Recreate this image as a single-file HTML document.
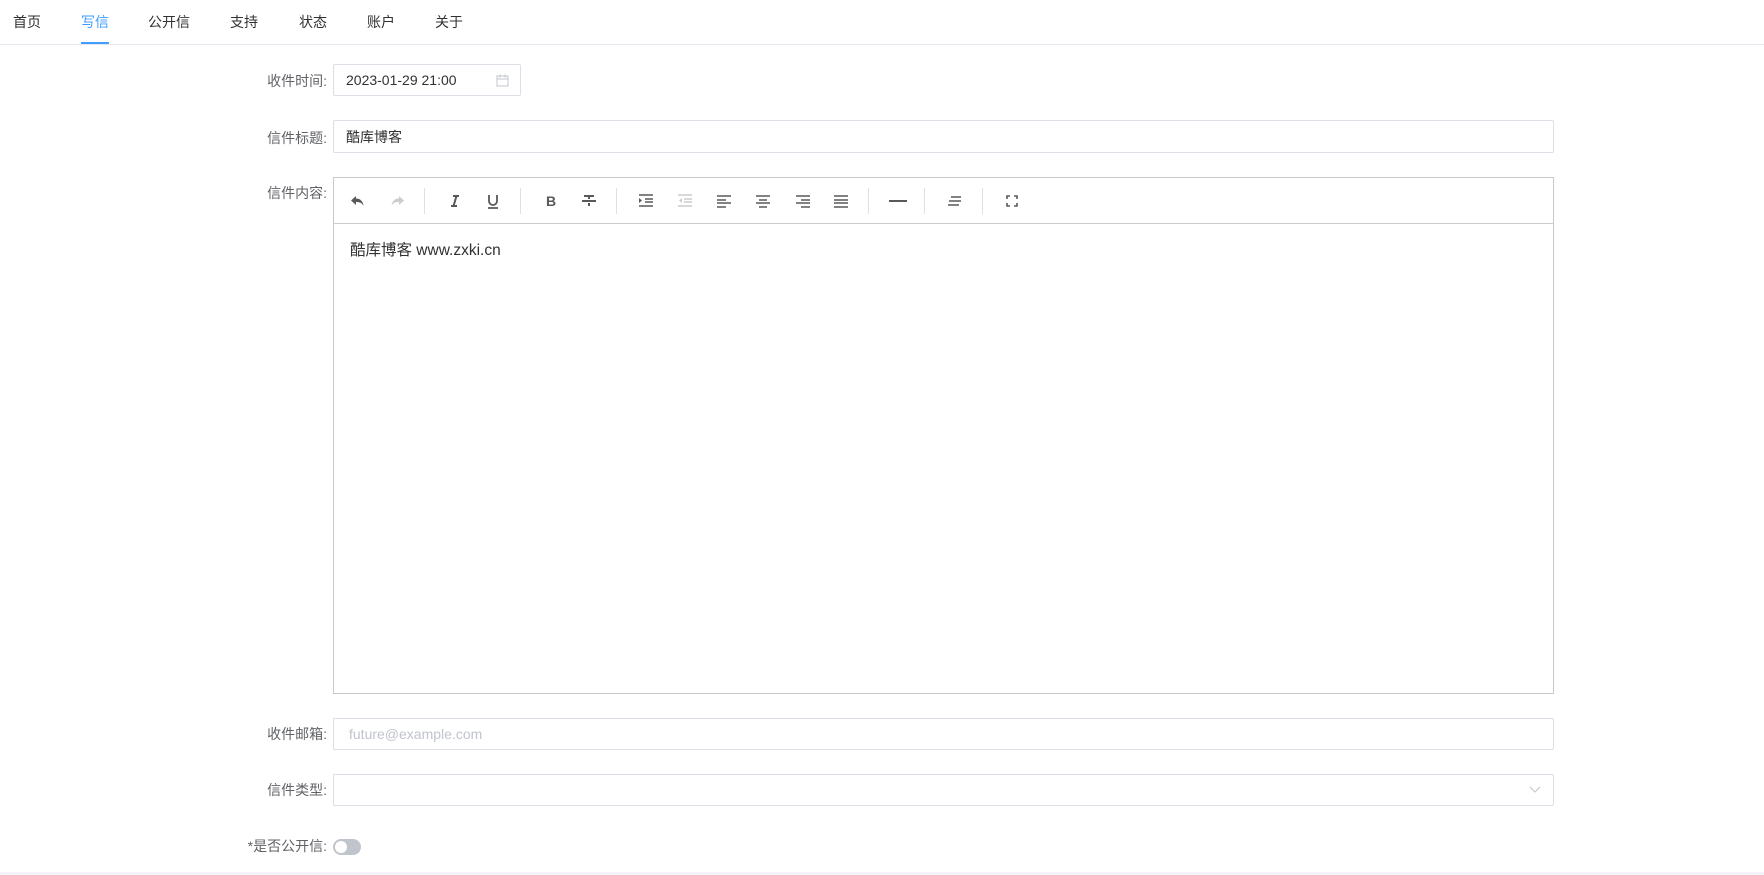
<!DOCTYPE html>
<html><head><meta charset="utf-8"><style>
*{box-sizing:border-box;margin:0;padding:0}
body{width:1764px;height:875px;background:#fff;font-family:"Liberation Sans","Noto Sans CJK SC",sans-serif;color:#303133;position:relative;overflow:hidden}
.nav{position:absolute;left:0;top:0;width:1764px;height:45px;border-bottom:1px solid #e4e7ed}
.nav span{position:absolute;top:12px;font-size:14px;line-height:20px}
.nav .act{color:#409eff}
.ul{position:absolute;left:81px;top:42px;width:28px;height:2px;background:#409eff}
.lab{position:absolute;right:1437px;font-size:14px;color:#606266;line-height:20px;white-space:nowrap}
.box{position:absolute;left:333px;width:1221px;height:32px;border:1px solid #dcdfe6;border-radius:2px;font-size:14px;line-height:30px;padding-left:12px}
.ed{position:absolute;left:333px;top:177px;width:1221px;height:517px;border:1px solid #c9c9c9}
.tb{height:46px;border-bottom:1px solid #ccc;position:relative}
.ic{position:absolute;top:14px;width:18px;height:18px}
.sep{position:absolute;top:10px;width:1px;height:26px;background:#e0e0e0}
.bot{position:absolute;left:0;top:872px;width:1764px;height:3px;background:#f2f4f7}
</style></head><body>
<div class="nav">
<span style="left:13px">首页</span><span class="act" style="left:81px">写信</span><span style="left:148px">公开信</span><span style="left:230px">支持</span><span style="left:299px">状态</span><span style="left:367px">账户</span><span style="left:435px">关于</span>
<div class="ul"></div></div>

<div class="lab" style="top:71px">收件时间:</div>
<div class="box" style="top:64px;width:188px">2023-01-29 21:00
<svg style="position:absolute;right:11px;top:9px" width="13" height="13" viewBox="0 0 13 13" fill="none" stroke="#c0c4cc" stroke-width="1"><rect x="1" y="2" width="11" height="10"/><path d="M1 5h11M4 0.5v3M9 0.5v3"/></svg></div>

<div class="lab" style="top:128px">信件标题:</div>
<div class="box" style="top:120px;height:33px;line-height:32px">酷库博客</div>

<div class="lab" style="top:183px">信件内容:</div>
<div class="ed"><div class="tb">
<svg class="ic" style="left:15px" viewBox="0 0 18 18"><path d="M7 4 2 8.5 7 13V10c4 0 6 1 7.5 4-0.5-4.5-3-7.5-7.5-7.5z" fill="#595959"/></svg>
<svg class="ic" style="left:54px" viewBox="0 0 18 18"><path d="M11 4l5 4.5-5 4.5V10c-4 0-6 1-7.5 4 .5-4.5 3-7.5 7.5-7.5z" fill="#ccc"/></svg>
<div class="sep" style="left:90px"></div>
<svg class="ic" style="left:112px" viewBox="0 0 18 18"><path d="M7 4h6M5 14h6M10.5 4 7.5 14" stroke="#595959" stroke-width="2" fill="none"/></svg>
<svg class="ic" style="left:150px" viewBox="0 0 18 18"><path d="M5 3v6a4 4 0 0 0 8 0V3M4 16h10" stroke="#595959" stroke-width="1.8" fill="none"/></svg>
<div class="sep" style="left:186px"></div>
<div class="ic" style="left:208px;font-weight:bold;font-size:14px;color:#595959;text-align:center;line-height:18px">B</div>
<svg class="ic" style="left:246px" viewBox="0 0 18 18"><path d="M4 4h10M9 4v3M2 9h14M9 11v3" stroke="#595959" stroke-width="2" fill="none"/></svg>
<div class="sep" style="left:282px"></div>
<svg class="ic" style="left:303px" viewBox="0 0 18 18"><path d="M2 3h14M8 7h8M8 10h8M2 14h14" stroke="#595959" stroke-width="1.6"/><path d="M2 6l3 2.5L2 11z" fill="#595959"/></svg>
<svg class="ic" style="left:342px" viewBox="0 0 18 18"><path d="M2 3h14M8 7h8M8 10h8M2 14h14" stroke="#ccc" stroke-width="1.6"/><path d="M6 6 3 8.5 6 11z" fill="#ccc"/></svg>
<svg class="ic" style="left:381px" viewBox="0 0 18 18"><path d="M2 4h14M2 8h9M2 11h14M2 15h9" stroke="#595959" stroke-width="1.6"/></svg>
<svg class="ic" style="left:420px" viewBox="0 0 18 18"><path d="M2 4h14M5 8h8M2 11h14M5 15h8" stroke="#595959" stroke-width="1.6"/></svg>
<svg class="ic" style="left:460px" viewBox="0 0 18 18"><path d="M2 4h14M7 8h9M2 11h14M7 15h9" stroke="#595959" stroke-width="1.6"/></svg>
<svg class="ic" style="left:498px" viewBox="0 0 18 18"><path d="M2 4h14M2 8h14M2 11h14M2 15h14" stroke="#595959" stroke-width="1.6"/></svg>
<div class="sep" style="left:534px"></div>
<svg class="ic" style="left:555px" viewBox="0 0 18 18"><path d="M0 9h18" stroke="#595959" stroke-width="2"/></svg>
<div class="sep" style="left:590px"></div>
<svg class="ic" style="left:612px" viewBox="0 0 18 18"><path d="M5 5h10M3 9h12M2 13h11" stroke="#595959" stroke-width="1.6"/></svg>
<div class="sep" style="left:648px"></div>
<svg class="ic" style="left:669px" viewBox="0 0 18 18"><path d="M4 7V4h3M11 4h3v3M14 11v3h-3M7 14H4v-3" stroke="#595959" stroke-width="1.6" fill="none"/></svg>
</div>
<div style="position:absolute;left:16px;top:60px;font-size:15.5px;color:#303133">酷库博客 www.zxki.cn</div>
</div>

<div class="lab" style="top:724px">收件邮箱:</div>
<div class="box" style="top:718px;color:#c0c4cc;padding-left:15px">future@example.com</div>

<div class="lab" style="top:780px">信件类型:</div>
<div class="box" style="top:774px">
<svg style="position:absolute;right:12px;top:11px" width="12" height="8" viewBox="0 0 12 8"><path d="M1 1l5 5 5-5" stroke="#c0c4cc" fill="none"/></svg></div>

<div class="lab" style="top:836px">*是否公开信:</div>
<div style="position:absolute;left:333px;top:839px;width:28px;height:16px;border-radius:8px;background:#c0c4cc"><div style="position:absolute;left:2px;top:2px;width:12px;height:12px;border-radius:50%;background:#fff"></div></div>
<div class="bot"></div>
</body></html>
